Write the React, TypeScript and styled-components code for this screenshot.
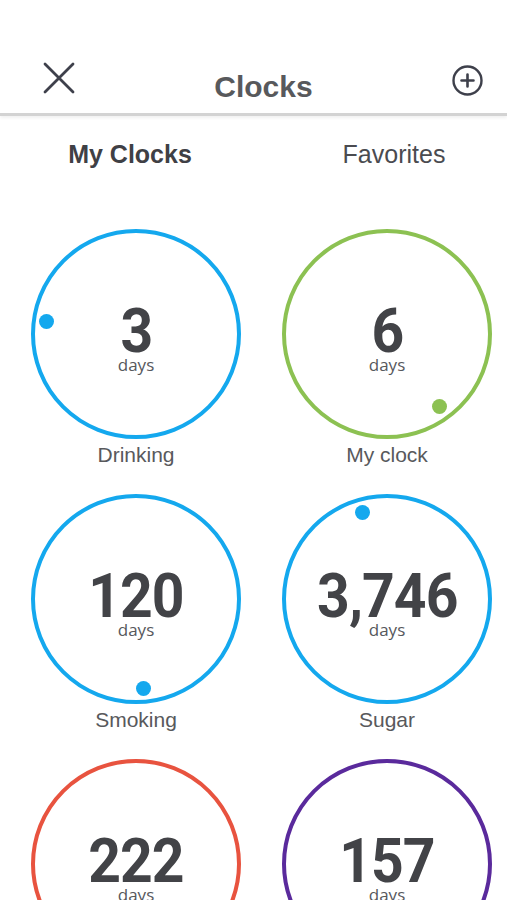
import React from "react";
import styled, { createGlobalStyle } from "styled-components";

type Clock = {
  name: string;
  count: string;
  color: string;
  dotAngle?: number;
};

const clocks: Clock[] = [
  { name: "Drinking", count: "3", color: "#14a8ee", dotAngle: 278 },
  { name: "My clock", count: "6", color: "#8cc152", dotAngle: 144 },
  { name: "Smoking", count: "120", color: "#14a8ee", dotAngle: 175 },
  { name: "Sugar", count: "3,746", color: "#14a8ee", dotAngle: 344 },
  { name: "Cooking", count: "222", color: "#e8533f" },
  { name: "Reading", count: "157", color: "#5a2a9c" }
];

const RING = 210;
const ORBIT = 90;
const DOT = 15;

const dotPosition = (angle: number) => {
  const rad = (angle * Math.PI) / 180;
  return {
    left: RING / 2 + ORBIT * Math.sin(rad) - DOT / 2,
    top: RING / 2 - ORBIT * Math.cos(rad) - DOT / 2
  };
};

const CloseIcon = () => (
  <svg width="32" height="32" viewBox="0 0 32 32">
    <path d="M2 2 L30 30 M30 2 L2 30" stroke="#3e404b" strokeWidth="2.8" strokeLinecap="round" fill="none" />
  </svg>
);

const AddIcon = () => (
  <svg width="31" height="31" viewBox="0 0 31 31">
    <circle cx="15.5" cy="15.5" r="14" stroke="#3e404b" strokeWidth="2.4" fill="none" />
    <path d="M15.5 9.5 V21.5 M9.5 15.5 H21.5" stroke="#3e404b" strokeWidth="2.6" strokeLinecap="round" fill="none" />
  </svg>
);

const ClockCard = ({ clock }: { clock: Clock }) => (
  <Cell>
    <Ring $color={clock.color}>
      <Count>{clock.count}</Count>
      <Days>days</Days>
      {clock.dotAngle !== undefined && (
        <Dot $color={clock.color} style={dotPosition(clock.dotAngle)} />
      )}
    </Ring>
    <Label>{clock.name}</Label>
  </Cell>
);

export default function App() {
  return (
    <>
      <GlobalStyle />
      <Page>
        <Header>
          <IconButton>
            <CloseIcon />
          </IconButton>
          <Title>Clocks</Title>
          <IconButton $top={3}>
            <AddIcon />
          </IconButton>
        </Header>
        <Tabs>
          <Tab $active>My Clocks</Tab>
          <Tab $offset={21}>Favorites</Tab>
        </Tabs>
        <Grid>
          {clocks.map((c) => (
            <ClockCard key={c.name} clock={c} />
          ))}
        </Grid>
      </Page>
    </>
  );
}

const GlobalStyle = createGlobalStyle`
  html, body {
    margin: 0;
    padding: 0;
    overflow: hidden;
    background: #ffffff;
  }
  body {
    font-family: "Liberation Sans", Arial, sans-serif;
  }
`;

const Page = styled.div`
  width: 507px;
  height: 900px;
  overflow: hidden;
  background: #ffffff;
`;

const Header = styled.header`
  box-sizing: border-box;
  height: 116px;
  padding: 62px 24px 0 43px;
  display: flex;
  justify-content: space-between;
  align-items: flex-start;
  border-bottom: 3px solid #d3d3d3;
  box-shadow: 0 2px 3px rgba(0, 0, 0, 0.06);
`;

const IconButton = styled.div<{ $top?: number }>`
  display: flex;
  margin-top: ${(p) => p.$top ?? 0}px;
`;

const Title = styled.h1`
  margin: 8px 0 0 0;
  font-size: 30px;
  line-height: 34px;
  font-weight: 700;
  color: #58595c;
`;

const Tabs = styled.nav`
  display: grid;
  grid-template-columns: 260px 1fr;
  margin-top: 23px;
`;

const Tab = styled.div<{ $active?: boolean; $offset?: number }>`
  text-align: center;
  padding-left: ${(p) => p.$offset ?? 0}px;
  font-size: 25px;
  line-height: 30px;
  font-weight: ${(p) => (p.$active ? 700 : 400)};
  color: ${(p) => (p.$active ? "#3f4045" : "#4a4b50")};
`;

const Grid = styled.div`
  display: grid;
  grid-template-columns: 240px 240px;
  column-gap: 11px;
  row-gap: 27px;
  padding: 60px 0 0 16px;
`;

const Cell = styled.div`
  display: flex;
  flex-direction: column;
  align-items: center;
`;

const Ring = styled.div<{ $color: string }>`
  position: relative;
  box-sizing: border-box;
  width: ${RING}px;
  height: ${RING}px;
  border-radius: 50%;
  border: 4px solid ${(p) => p.$color};
  display: flex;
  flex-direction: column;
  align-items: center;
  justify-content: center;
  padding-top: 13px;
`;

const Count = styled.div`
  font-family: Roboto, "Liberation Sans", sans-serif;
  font-weight: 700;
  font-size: 62px;
  line-height: 48px;
  letter-spacing: -1px;
  color: #424347;
  transform: scaleX(0.92);
`;

const Days = styled.div`
  font-family: "Open Sans", "Liberation Sans", sans-serif;
  font-size: 17px;
  line-height: 20px;
  color: #56585c;
`;

const Dot = styled.span<{ $color: string }>`
  position: absolute;
  width: ${DOT}px;
  height: ${DOT}px;
  margin: -4px 0 0 -4px;
  border-radius: 50%;
  background: ${(p) => p.$color};
`;

const Label = styled.div`
  margin-top: 4px;
  font-size: 21px;
  line-height: 24px;
  color: #58595c;
`;
